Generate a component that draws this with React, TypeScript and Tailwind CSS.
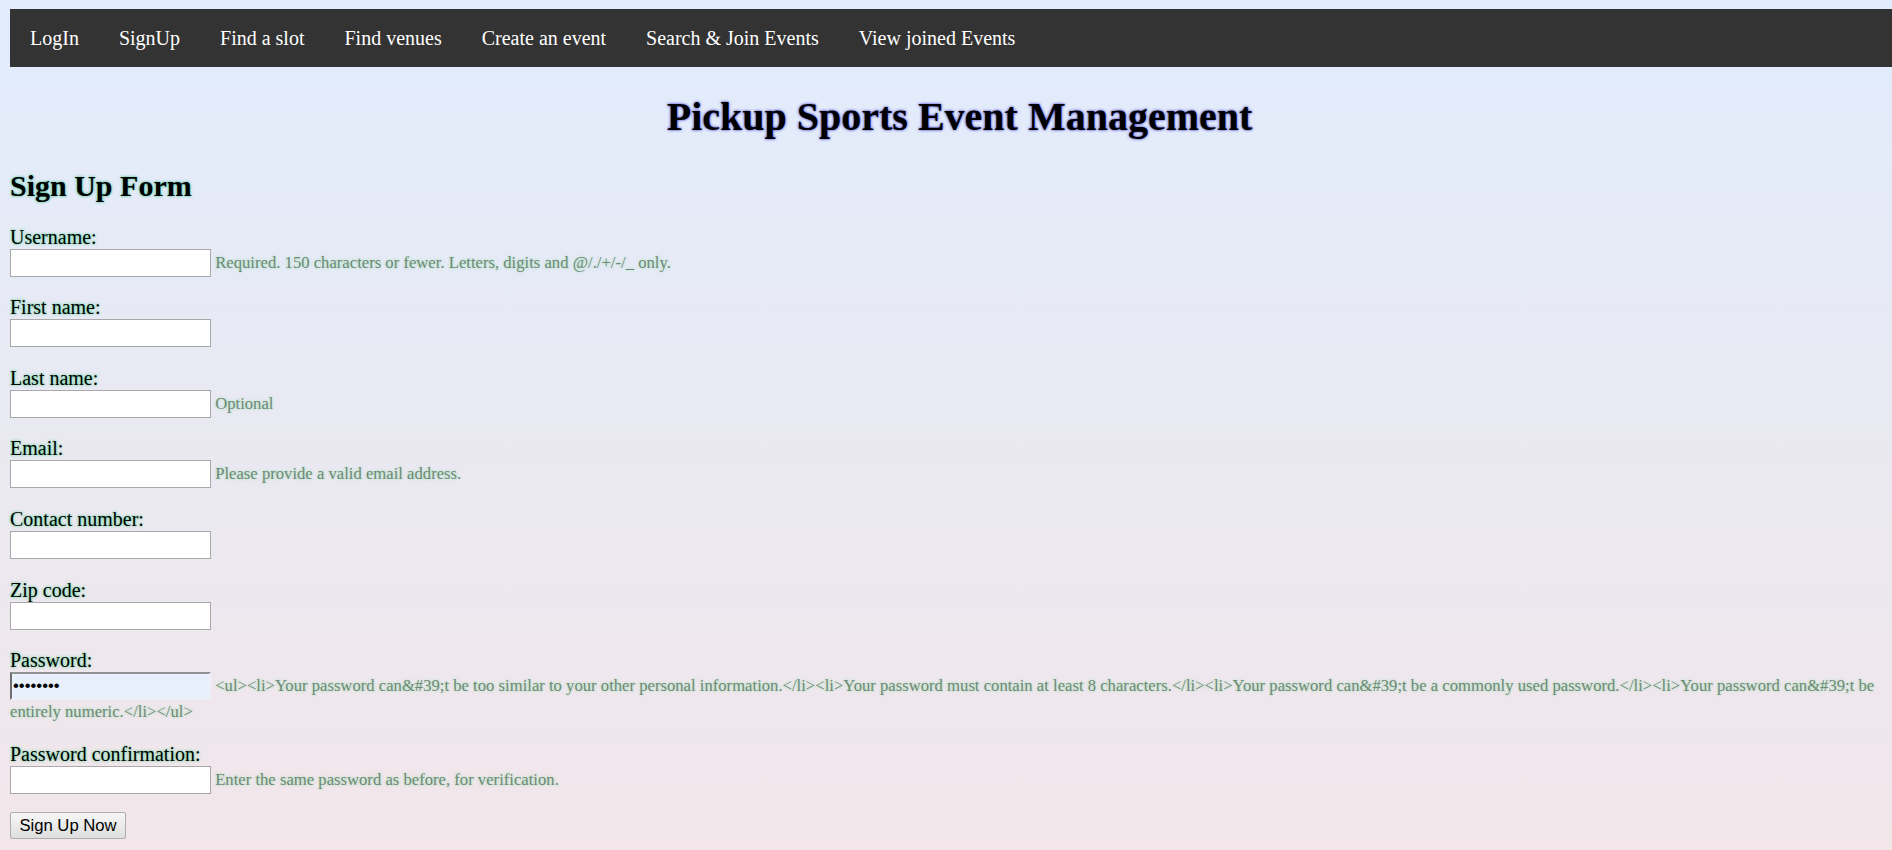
import React from "react";

const navItems = [
  "LogIn",
  "SignUp",
  "Find a slot",
  "Find venues",
  "Create an event",
  "Search & Join Events",
  "View joined Events",
];

type Field = {
  label: string;
  help?: string;
  password?: boolean;
};

const fields: Field[] = [
  {
    label: "Username:",
    help: "Required. 150 characters or fewer. Letters, digits and @/./+/-/_ only.",
  },
  { label: "First name:" },
  { label: "Last name:", help: "Optional" },
  { label: "Email:", help: "Please provide a valid email address." },
  { label: "Contact number:" },
  { label: "Zip code:" },
  {
    label: "Password:",
    password: true,
    help: "<ul><li>Your password can&#39;t be too similar to your other personal information.</li><li>Your password must contain at least 8 characters.</li><li>Your password can&#39;t be a commonly used password.</li><li>Your password can&#39;t be entirely numeric.</li></ul>",
  },
  {
    label: "Password confirmation:",
    help: "Enter the same password as before, for verification.",
  },
];

export default function App() {
  return (
    <div className="w-full h-[850px] overflow-hidden bg-gradient-to-b from-[#e1ecfd] via-[#e9e9f2] to-[#f2e6ea] font-['Liberation_Serif',serif] text-black">
      <div className="w-[1899px] ml-[10px] pt-[9px]">
        <ul className="flex h-[58px] bg-[#333333]">
          {navItems.map((item) => (
            <li key={item}>
              <a className="block px-[20px] py-[17.5px] text-[20px] leading-[23px] text-white whitespace-nowrap">
                {item}
              </a>
            </li>
          ))}
        </ul>

        <h1 className="mt-[28px] text-center text-[40px] leading-[44px] font-bold [text-shadow:0_0_3px_#2020c8]">
          Pickup Sports Event Management
        </h1>

        <h2 className="mt-[29.5px] text-[30px] leading-[33px] font-bold [text-shadow:0_0_3px_#20b880]">
          Sign Up Form
        </h2>

        <form className="mt-[23px] flex flex-col gap-[18.67px]">
          {fields.map((f) => (
            <div key={f.label}>
              <label className="block text-[20px] leading-[24px] [text-shadow:0_0_3px_#30c878]">
                {f.label}
              </label>
              <div className="text-[16.67px] leading-[23px]">
                {f.password ? (
                  <input
                    type="password"
                    defaultValue="abcdefgh"
                    readOnly
                    className="w-[201px] h-[28px] px-[1px] align-baseline bg-[#e8f0fe] border-2 border-t-[#929292] border-l-[#6f6f6f] border-r-[#edf0f6] border-b-[#edf0f6] text-[16.67px] font-['Liberation_Sans',sans-serif] outline-none"
                  />
                ) : (
                  <input
                    type="text"
                    className="w-[201px] h-[28px] px-[2px] align-baseline bg-white border border-[#a9a9a9] text-[16.67px] font-['Liberation_Sans',sans-serif] outline-none"
                  />
                )}
                {f.help ? (
                  <>
                    {" "}
                    <span className="text-[#6f8a76] [text-shadow:0_0_3px_#98dcae]">
                      {f.help}
                    </span>
                  </>
                ) : null}
              </div>
            </div>
          ))}
        </form>

        <button
          type="button"
          className="mt-[18px] w-[116px] h-[27px] border border-[#adadad] rounded-[2px] bg-gradient-to-b from-[#f7f7f7] to-[#dedede] text-[16.67px] leading-[20px] font-['Liberation_Sans',sans-serif] text-black"
        >
          Sign Up Now
        </button>
      </div>
    </div>
  );
}
